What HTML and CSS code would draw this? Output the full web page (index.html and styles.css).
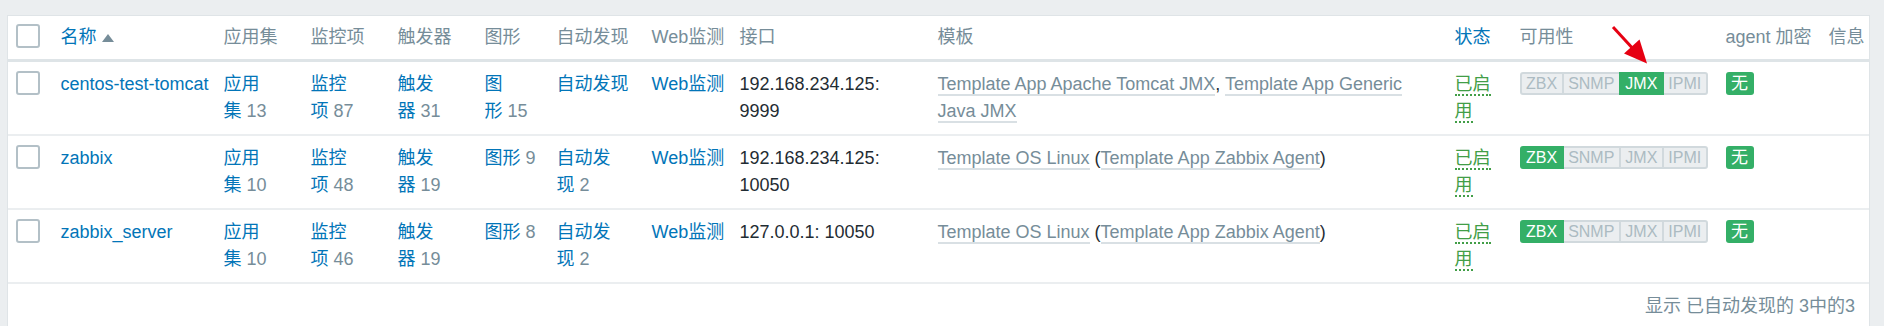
FILE: index.html
```html
<!DOCTYPE html>
<html lang="zh-CN">
<head>
    <meta charset="UTF-8">
    <title>主机</title>
    <link rel="stylesheet" href="styles.css">
</head>
<body>
    <div class="list">
        <table class="list-table">
            <colgroup>
                <col style="width: 45px">
                <col style="width: 163px">
                <col style="width: 87px">
                <col style="width: 87px">
                <col style="width: 87px">
                <col style="width: 72px">
                <col style="width: 95px">
                <col style="width: 88px">
                <col style="width: 198px">
                <col style="width: 517px">
                <col style="width: 65px">
                <col style="width: 206px">
                <col style="width: 103px">
                <col>
            </colgroup>
            <thead>
                <tr>
                    <th><span class="checkbox"></span></th>
                    <th><a href="#">名称</a><span class="arrow-up"></span></th>
                    <th>应用集</th>
                    <th>监控项</th>
                    <th>触发器</th>
                    <th>图形</th>
                    <th>自动发现</th>
                    <th>Web监测</th>
                    <th>接口</th>
                    <th>模板</th>
                    <th><a href="#">状态</a></th>
                    <th>可用性</th>
                    <th>agent 加密</th>
                    <th>信息</th>
                </tr>
            </thead>
            <tbody>
                <tr>
                    <td><span class="checkbox"></span></td>
                    <td class="nowrap"><a href="#">centos-test-tomcat</a></td>
                    <td><a href="#">应用集</a>&nbsp;<span class="count">13</span></td>
                    <td><a href="#">监控项</a>&nbsp;<span class="count">87</span></td>
                    <td><a href="#">触发器</a>&nbsp;<span class="count">31</span></td>
                    <td><a href="#">图形</a>&nbsp;<span class="count">15</span></td>
                    <td><a href="#">自动发现</a></td>
                    <td><a href="#" class="nowrap">Web监测</a></td>
                    <td>192.168.234.125: 9999</td>
                    <td><a href="#" class="link-alt">Template App Apache Tomcat JMX</a>, <a href="#" class="link-alt">Template App Generic Java JMX</a></td>
                    <td><a href="#" class="link-action">已启用</a></td>
                    <td>
                        <div class="avail">
                            <span>ZBX</span><span>SNMP</span><span class="on">JMX</span><span>IPMI</span>
                        </div>
                    </td>
                    <td><span class="enc">无</span></td>
                    <td></td>
                </tr>
                <tr>
                    <td><span class="checkbox"></span></td>
                    <td class="nowrap"><a href="#">zabbix</a></td>
                    <td><a href="#">应用集</a>&nbsp;<span class="count">10</span></td>
                    <td><a href="#">监控项</a>&nbsp;<span class="count">48</span></td>
                    <td><a href="#">触发器</a>&nbsp;<span class="count">19</span></td>
                    <td><a href="#">图形</a>&nbsp;<span class="count">9</span></td>
                    <td><a href="#">自动发现</a>&nbsp;<span class="count">2</span></td>
                    <td><a href="#" class="nowrap">Web监测</a></td>
                    <td>192.168.234.125: 10050</td>
                    <td><a href="#" class="link-alt">Template OS Linux</a> (<a href="#" class="link-alt">Template App Zabbix Agent</a>)</td>
                    <td><a href="#" class="link-action">已启用</a></td>
                    <td>
                        <div class="avail">
                            <span class="on">ZBX</span><span>SNMP</span><span>JMX</span><span>IPMI</span>
                        </div>
                    </td>
                    <td><span class="enc">无</span></td>
                    <td></td>
                </tr>
                <tr>
                    <td><span class="checkbox"></span></td>
                    <td class="nowrap"><a href="#">zabbix_server</a></td>
                    <td><a href="#">应用集</a>&nbsp;<span class="count">10</span></td>
                    <td><a href="#">监控项</a>&nbsp;<span class="count">46</span></td>
                    <td><a href="#">触发器</a>&nbsp;<span class="count">19</span></td>
                    <td><a href="#">图形</a>&nbsp;<span class="count">8</span></td>
                    <td><a href="#">自动发现</a>&nbsp;<span class="count">2</span></td>
                    <td><a href="#" class="nowrap">Web监测</a></td>
                    <td>127.0.0.1: 10050</td>
                    <td><a href="#" class="link-alt">Template OS Linux</a> (<a href="#" class="link-alt">Template App Zabbix Agent</a>)</td>
                    <td><a href="#" class="link-action">已启用</a></td>
                    <td>
                        <div class="avail">
                            <span class="on">ZBX</span><span>SNMP</span><span>JMX</span><span>IPMI</span>
                        </div>
                    </td>
                    <td><span class="enc">无</span></td>
                    <td></td>
                </tr>
            </tbody>
        </table>
        <div class="paging">显示 已自动发现的 3中的3</div>
    </div>

    <!-- annotation arrow -->
    <svg class="mark" viewBox="0 0 50 50" width="50" height="50">
        <line x1="13" y1="7" x2="36" y2="32" stroke="#e60012" stroke-width="3"/>
        <polygon points="47,43.5 24,33.5 39.5,19.5" fill="#e60012"/>
    </svg>
</body>
</html>
```

FILE: styles.css
```css
* {
    margin: 0;
    padding: 0;
    box-sizing: border-box;
}

body {
    font-family: "Liberation Sans", Arial, "Noto Sans CJK SC", sans-serif;
    font-size: 18px;
    line-height: 27px;
    color: #1f2c33;
    background: #ebeef0;
    padding: 15px 14px 0 7px;
}

a {
    color: #0275b8;
    text-decoration: none;
}

.list {
    background: #fff;
    border: 1px solid #dfe4e7;
    border-bottom: none;
}

.list-table {
    width: 100%;
    table-layout: fixed;
    border-collapse: collapse;
}

.list-table th {
    text-align: left;
    font-weight: normal;
    color: #768d99;
    padding: 8px 7.5px;
    vertical-align: top;
    border-bottom: 3px solid #dee4e7;
    white-space: nowrap;
}

.list-table td {
    padding: 9px 7.5px;
    vertical-align: top;
    border-bottom: 2px solid #ebeef0;
}

.checkbox {
    display: block;
    width: 24px;
    height: 24px;
    border: 2px solid #b3c0c7;
    border-radius: 3px;
    background: #fff;
}

.arrow-up {
    display: inline-block;
    margin-left: 5px;
    border-left: 6px solid transparent;
    border-right: 6px solid transparent;
    border-bottom: 8px solid #768d99;
    vertical-align: 1px;
}

.count {
    color: #768d99;
}

.nowrap {
    white-space: nowrap;
}

.link-alt {
    color: #768d99;
    border-bottom: 2px solid #d9e0e4;
}

.link-action {
    color: #429e47;
    border-bottom: 2px dotted #429e47;
}

.avail {
    display: flex;
    margin-top: 1px;
    font-size: 16px;
    line-height: 19px;
}

.avail span {
    padding: 0 4.5px;
    background: #ebeef0;
    color: #acbbc2;
    border: 2px solid #d1d9dd;
    margin-left: -2px;
}

.avail span:first-child {
    margin-left: 0;
    border-radius: 3px 0 0 3px;
}

.avail span:last-child {
    border-radius: 0 3px 3px 0;
}

.avail span.on {
    background: #34af67;
    border-color: #34af67;
    color: #fff;
    position: relative;
}

.enc {
    display: inline-block;
    margin-top: 1px;
    width: 28px;
    height: 23px;
    line-height: 23px;
    font-size: 17px;
    text-align: center;
    color: #fff;
    background: #34af67;
    border-radius: 3px;
    vertical-align: top;
}

.paging {
    text-align: right;
    color: #768d99;
    padding: 9px 14px;
}

.mark {
    position: absolute;
    left: 1600px;
    top: 20px;
}
```
